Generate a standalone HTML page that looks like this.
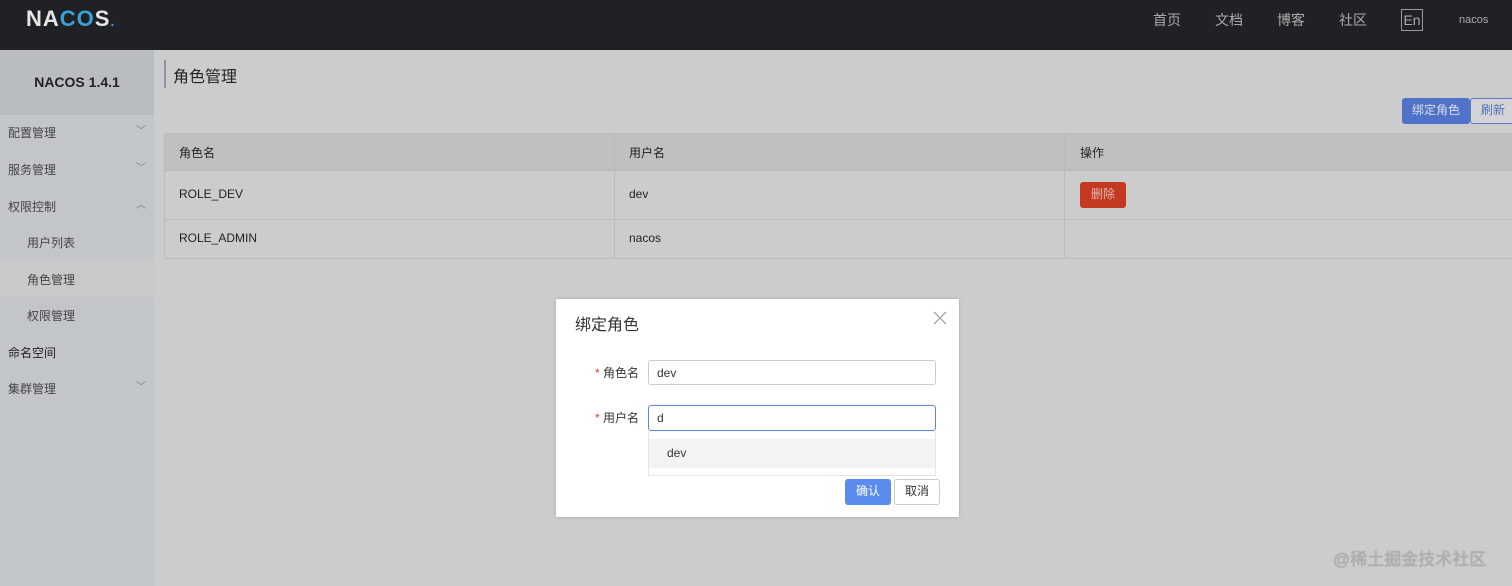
<!DOCTYPE html>
<html><head><meta charset="utf-8"><style>
*{box-sizing:border-box;margin:0;padding:0}
body{width:1512px;height:586px;overflow:hidden;background:#cccccc;font-family:"Liberation Sans","Noto Sans CJK SC",sans-serif;position:relative;color:#333}
.hd{position:absolute;left:0;top:0;width:1512px;height:50px;background:#1f2124}
.logo{position:absolute;left:26px;top:6px;font-size:22px;font-weight:bold;color:#e6e6e6;letter-spacing:1px}
.nav{position:absolute;top:10px;font-size:14px;color:#aaa}
.side{position:absolute;left:0;top:50px;width:154px;height:536px;background:#c3c6c9}
.ver{position:absolute;left:0;top:50px;width:154px;height:65px;background:#babdc0;text-align:center;line-height:65px;font-weight:bold;font-size:14px;color:#222}
.mi{position:absolute;font-size:12px;color:#444}
.chev{position:absolute;left:136px;font-size:10px;color:#777}
.t{position:absolute;font-size:12px;color:#222}
.abs{position:absolute}
</style></head><body>
<div class="hd"></div>
<div class="logo">NA<span style="color:#3aa0d8">CO</span>S<span style="color:#3aa0d8;font-size:14px">.</span></div>
<div class="nav" style="left:1153px">首页</div>
<div class="nav" style="left:1215px">文档</div>
<div class="nav" style="left:1277px">博客</div>
<div class="nav" style="left:1339px">社区</div>
<div class="abs" style="left:1401px;top:9px;width:22px;height:22px;border:1px solid #999;color:#aaa;font-size:14px;text-align:center;line-height:20px">En</div>
<div class="abs" style="left:1459px;top:14px;font-size:11px;color:#aaa">nacos</div>

<div class="side"></div>
<div class="ver">NACOS 1.4.1</div>
<div class="abs" style="left:0;top:260px;width:154px;height:37px;background:#c9c8ca"></div>
<div class="mi" style="left:8px;top:124px">配置管理</div><div class="chev" style="top:122px">﹀</div>
<div class="mi" style="left:8px;top:161px">服务管理</div><div class="chev" style="top:159px">﹀</div>
<div class="mi" style="left:8px;top:198px">权限控制</div><div class="chev" style="top:196px">︿</div>
<div class="mi" style="left:27px;top:234px">用户列表</div>
<div class="mi" style="left:27px;top:271px">角色管理</div>
<div class="mi" style="left:27px;top:307px">权限管理</div>
<div class="mi" style="left:8px;top:344px;color:#222">命名空间</div>
<div class="mi" style="left:8px;top:380px">集群管理</div><div class="chev" style="top:378px">﹀</div>

<div class="abs" style="left:164px;top:60px;width:2px;height:28px;background:#8894a8"></div>
<div class="abs" style="left:173px;top:63px;font-size:16px;color:#222">角色管理</div>
<div class="abs" style="left:1402px;top:98px;width:68px;height:26px;background:#4f73c8;border-radius:3px;color:#dde;font-size:12px;text-align:center;line-height:25px">绑定角色</div>
<div class="abs" style="left:1470px;top:98px;width:50px;height:26px;background:#d4d4d8;border:1px solid #5d7ac8;border-radius:3px;color:#4f6fb8;font-size:12px;line-height:23px;padding-left:10px">刷新</div>

<div class="abs" style="left:164px;top:133px;width:1348px;height:126px;border:1px solid #bbb;border-right:none"></div>
<div class="abs" style="left:165px;top:134px;width:1347px;height:37px;background:#bfc0c2;border-bottom:1px solid #b5b5b5"></div>
<div class="abs" style="left:165px;top:219px;width:1347px;height:1px;background:#bbb"></div>
<div class="abs" style="left:614px;top:134px;width:1px;height:124px;background:#bbb"></div>
<div class="abs" style="left:1064px;top:134px;width:1px;height:124px;background:#bbb"></div>
<div class="t" style="left:179px;top:144px">角色名</div>
<div class="t" style="left:629px;top:144px">用户名</div>
<div class="t" style="left:1080px;top:144px">操作</div>
<div class="t" style="left:179px;top:187px">ROLE_DEV</div>
<div class="t" style="left:629px;top:187px">dev</div>
<div class="abs" style="left:1080px;top:182px;width:46px;height:26px;background:#c43a20;border-radius:3px;color:#e0b8b0;font-size:12px;text-align:center;line-height:25px">删除</div>
<div class="t" style="left:179px;top:231px">ROLE_ADMIN</div>
<div class="t" style="left:629px;top:231px">nacos</div>

<div class="abs" style="left:556px;top:299px;width:403px;height:218px;background:#fff;box-shadow:0 0 3px rgba(0,0,0,.2)"></div>
<div class="abs" style="left:575px;top:311px;font-size:16px;color:#333">绑定角色</div>
<svg class="abs" style="left:933px;top:311px" width="14" height="14"><path d="M1 1L13 13M13 1L1 13" stroke="#999" stroke-width="1.2"/></svg>
<div class="abs" style="left:595px;top:364px;font-size:12px;color:#333"><span style="color:#e04030">*</span> 角色名</div>
<div class="abs" style="left:648px;top:360px;width:288px;height:25px;border:1px solid #ccc;border-radius:3px;font-size:12px;padding:5px 0 0 8px;color:#333">dev</div>
<div class="abs" style="left:595px;top:409px;font-size:12px;color:#333"><span style="color:#e04030">*</span> 用户名</div>
<div class="abs" style="left:648px;top:405px;width:288px;height:26px;border:1px solid #5f86d6;border-radius:3px;font-size:12px;padding:5px 0 0 8px;color:#333">d</div>
<div class="abs" style="left:648px;top:431px;width:288px;height:45px;border:1px solid #e4e4e4;border-top:none;background:#fff"></div>
<div class="abs" style="left:649px;top:439px;width:286px;height:29px;background:#f2f3f5;font-size:12px;padding:7px 0 0 18px;color:#333">dev</div>
<div class="abs" style="left:845px;top:479px;width:46px;height:26px;background:#5a8cf0;border-radius:3px;color:#fff;font-size:12px;text-align:center;line-height:25px">确认</div>
<div class="abs" style="left:894px;top:479px;width:46px;height:26px;border:1px solid #ccc;border-radius:3px;color:#333;font-size:12px;text-align:center;line-height:23px;background:#fff">取消</div>

<div class="abs" style="left:1333px;top:545px;font-size:17px;color:#b0b0b0;text-shadow:0 0 1px #888">@稀土掘金技术社区</div>
</body></html>
